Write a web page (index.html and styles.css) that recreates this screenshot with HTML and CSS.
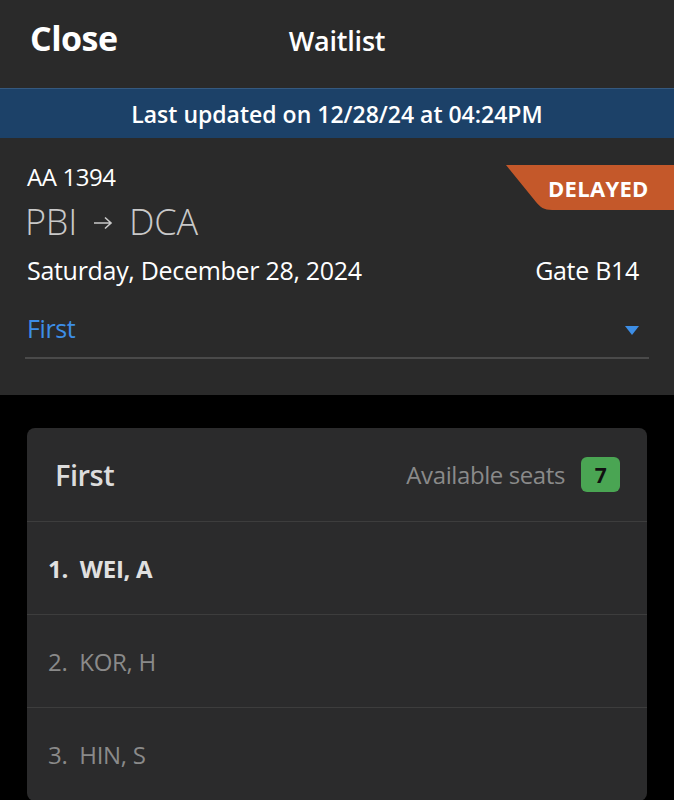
FILE: index.html
```html
<!DOCTYPE html>
<html lang="en">
<head>
    <meta charset="UTF-8">
    <meta name="viewport" content="width=device-width, initial-scale=1.0">
    <title>Waitlist</title>
    <link rel="stylesheet" href="styles.css">
</head>
<body>
    <header class="top-bar">
        <span class="close">Close</span>
        <span class="title">Waitlist</span>
    </header>

    <div class="updated">Last updated on 12/28/24 at 04:24PM</div>

    <!-- Flight summary -->
    <section class="flight">
        <div class="status">DELAYED</div>
        <div class="flight-no">AA 1394</div>
        <div class="route">
            <span>PBI</span>
            <svg class="arrow" width="20" height="14" viewBox="0 0 20 14">
                <path d="M1 7 H18 M12 1.5 L18 7 L12 12.5" fill="none" stroke="#c9c9c9" stroke-width="1.6"/>
            </svg>
            <span>DCA</span>
        </div>
        <div class="date-row">
            <span>Saturday, December 28, 2024</span>
            <span>Gate B14</span>
        </div>
        <div class="cabin-select">
            <span>First</span>
            <span class="caret"></span>
        </div>
    </section>

    <section class="list-card">
        <div class="card-head">
            <span class="card-title">First</span>
            <span class="seats">Available seats <span class="seat-count">7</span></span>
        </div>
        <div class="row current">1.&nbsp; WEI, A</div>
        <div class="row">2.&nbsp; KOR, H</div>
        <div class="row">3.&nbsp; HIN, S</div>
    </section>
</body>
</html>
```

FILE: styles.css
```css
body {
    margin: 0;
    background-color: #000;
    font-family: "Open Sans", "Noto Sans", sans-serif;
    color: #fff;
    overflow: hidden;
}
.top-bar {
    height: 88px;
    background-color: #2a2a2a;
    display: flex;
    align-items: center;
    justify-content: center;
    position: relative;
}
.close {
    position: absolute;
    left: 30px;
    top: 15px;
    font-size: 34px;
    font-weight: 700;
    letter-spacing: -0.5px;
}
.title {
    font-size: 27px;
    font-weight: 600;
    margin-top: -8px;
    letter-spacing: -0.2px;
}
.updated {
    height: 50px;
    box-sizing: border-box;
    border-top: 1px solid #35597f;
    background-color: #1c4168;
    display: flex;
    align-items: center;
    justify-content: center;
    font-size: 23px;
    font-weight: 600;
}
.flight {
    position: relative;
    background-color: #2a2a2a;
    height: 257px;
    box-sizing: border-box;
    padding: 24px 25px 0 27px;
}
.status {
    position: absolute;
    right: 0;
    top: 27px;
    height: 45px;
    width: 168px;
    box-sizing: border-box;
    padding-left: 42px;
    background-color: #c4582a;
    clip-path: path("M0 0 H168 V45 H46 C38 45 34 42 30 37 Z");
    display: flex;
    align-items: center;
    font-size: 22px;
    font-weight: 700;
    letter-spacing: 0.3px;
}
.flight-no {
    font-size: 24px;
    letter-spacing: -0.4px;
    line-height: 30px;
}
.route {
    display: flex;
    align-items: center;
    gap: 12px;
    font-size: 36px;
    font-weight: 300;
    color: #c9c9c9;
    line-height: 48px;
    margin-top: 6px;
    margin-left: -2px;
    letter-spacing: -0.2px;
}
.arrow {
    margin: 2px 4px 0;
}
.date-row {
    display: flex;
    justify-content: space-between;
    font-size: 25px;
    letter-spacing: -0.3px;
    line-height: 34px;
    margin-top: 7px;
    padding-right: 10px;
}
.cabin-select {
    display: flex;
    justify-content: space-between;
    align-items: center;
    margin-top: 20px;
    margin-left: -2px;
    padding: 0 10px 8px 2px;
    height: 52px;
    border-bottom: 2px solid #4a4a4a;
    color: #3d8ee6;
    font-size: 25px;
    letter-spacing: -0.4px;
    box-sizing: border-box;
    width: 624px;
}
.caret {
    width: 0;
    height: 0;
    border-left: 7px solid transparent;
    border-right: 7px solid transparent;
    border-top: 9px solid #3d8ee6;
    margin-top: 4px;
}
.list-card {
    margin: 33px 27px 0;
    background-color: #2b2b2c;
    border-radius: 8px;
}
.card-head {
    height: 93px;
    display: flex;
    align-items: center;
    justify-content: space-between;
    padding: 0 27px 0 28px;
    border-bottom: 1px solid #3d3d3d;
}
.card-title {
    font-size: 29px;
    font-weight: 600;
    color: #dcdcdc;
    letter-spacing: -0.5px;
}
.seats {
    display: flex;
    align-items: center;
    gap: 16px;
    font-size: 24px;
    color: #8a8a8a;
    letter-spacing: -0.4px;
}
.seat-count {
    width: 39px;
    height: 35px;
    border-radius: 6px;
    background-color: #4aa553;
    color: #111;
    font-weight: 700;
    font-size: 21px;
    display: flex;
    align-items: center;
    justify-content: center;
}
.row {
    height: 92px;
    display: flex;
    align-items: center;
    padding-left: 21px;
    border-bottom: 1px solid #3d3d3d;
    font-size: 24px;
    color: #8a8a8a;
    letter-spacing: -0.3px;
}
.row.current {
    color: #e0e0e0;
    font-weight: 700;
}
```
